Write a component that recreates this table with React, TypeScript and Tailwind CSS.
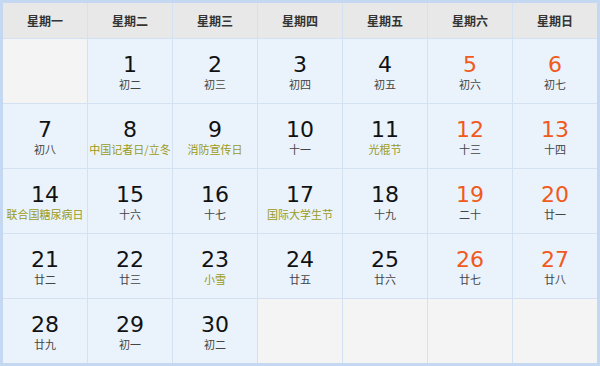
import React from "react";

type Day = { d: number; sub: string; fest?: boolean };

const heads = ["星期一", "星期二", "星期三", "星期四", "星期五", "星期六", "星期日"];

const days: Day[] = [
  { d: 1, sub: "初二" },
  { d: 2, sub: "初三" },
  { d: 3, sub: "初四" },
  { d: 4, sub: "初五" },
  { d: 5, sub: "初六" },
  { d: 6, sub: "初七" },
  { d: 7, sub: "初八" },
  { d: 8, sub: "中国记者日/立冬", fest: true },
  { d: 9, sub: "消防宣传日", fest: true },
  { d: 10, sub: "十一" },
  { d: 11, sub: "光棍节", fest: true },
  { d: 12, sub: "十三" },
  { d: 13, sub: "十四" },
  { d: 14, sub: "联合国糖尿病日", fest: true },
  { d: 15, sub: "十六" },
  { d: 16, sub: "十七" },
  { d: 17, sub: "国际大学生节", fest: true },
  { d: 18, sub: "十九" },
  { d: 19, sub: "二十" },
  { d: 20, sub: "廿一" },
  { d: 21, sub: "廿二" },
  { d: 22, sub: "廿三" },
  { d: 23, sub: "小雪", fest: true },
  { d: 24, sub: "廿五" },
  { d: 25, sub: "廿六" },
  { d: 26, sub: "廿七" },
  { d: 27, sub: "廿八" },
  { d: 28, sub: "廿九" },
  { d: 29, sub: "初一" },
  { d: 30, sub: "初二" },
];

export default function App() {
  // Nov starts on Tuesday: one blank cell before, four after
  const cells: (Day | null)[] = [null, ...days, null, null, null, null];

  return (
    <div className="w-[600px] h-[366px] bg-white font-['Noto_Sans_CJK_SC',sans-serif]">
      <div className="grid grid-cols-7 grid-rows-[35px_repeat(5,64px)] gap-px bg-[#d3e1f2] border-[3px] border-[#c4d8f2]">
        {heads.map((h) => (
          <div
            key={h}
            className="flex items-center justify-center bg-[#e8e8e8] text-[12px] font-bold text-[#333]"
          >
            {h}
          </div>
        ))}
        {cells.map((c, i) => {
          if (!c) return <div key={i} className="bg-[#f4f4f4]" />;
          const weekend = i % 7 >= 5;
          return (
            <div key={i} className="flex flex-col items-center bg-[#eaf3fb] pt-[14px]">
              <span
                className={
                  "font-['DejaVu_Sans',sans-serif] text-[22px] leading-[24px] " +
                  (weekend ? "text-[#f05a1c]" : "text-[#111]")
                }
              >
                {c.d}
              </span>
              <span
                className={
                  "text-[11px] leading-[15px] whitespace-nowrap " +
                  (c.fest ? "text-[#9a9a18]" : "text-[#444]")
                }
              >
                {c.sub}
              </span>
            </div>
          );
        })}
      </div>
    </div>
  );
}
